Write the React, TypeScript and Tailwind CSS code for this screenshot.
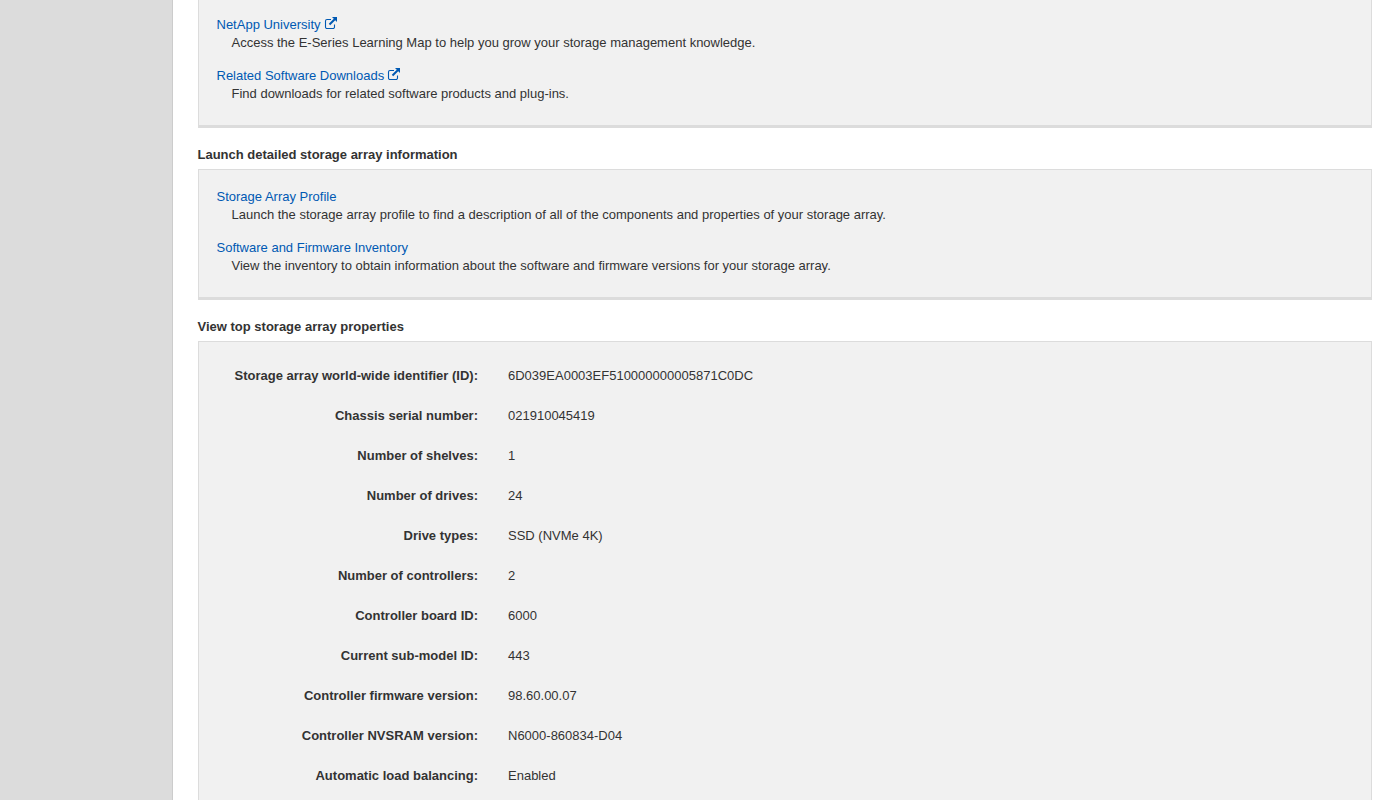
const font = { fontFamily: '"Liberation Sans", Arial, sans-serif' }

function ExternalIcon() {
  return (
    <svg viewBox="0 0 14 14" className="inline-block w-[14px] h-[14px] ml-[3px] align-[-1px]" fill="none">
      <path d="M7 3.5H3A1.5 1.5 0 0 0 1.5 5v6A1.5 1.5 0 0 0 3 12.5h6a1.5 1.5 0 0 0 1.5-1.5V8.5" stroke="currentColor" strokeWidth="1.1" />
      <path d="M5.5 8.5 11 3" stroke="currentColor" strokeWidth="2" />
      <path d="M8 1h5v5z" fill="currentColor" />
    </svg>
  )
}

function LinkItem({ title, text, external }: { title: string; text: string; external?: boolean }) {
  return (
    <div className="h-[51px]">
      <a className="block h-[18px] leading-[18px] text-[#0059b3] text-[13px]">
        {title}
        {external && <ExternalIcon />}
      </a>
      <p className="ml-[15px] h-[18px] leading-[18px] text-[13px]">{text}</p>
    </div>
  )
}

const properties = [
  ['Storage array world-wide identifier (ID):', '6D039EA0003EF510000000005871C0DC'],
  ['Chassis serial number:', '021910045419'],
  ['Number of shelves:', '1'],
  ['Number of drives:', '24'],
  ['Drive types:', 'SSD (NVMe 4K)'],
  ['Number of controllers:', '2'],
  ['Controller board ID:', '6000'],
  ['Current sub-model ID:', '443'],
  ['Controller firmware version:', '98.60.00.07'],
  ['Controller NVSRAM version:', 'N6000-860834-D04'],
  ['Automatic load balancing:', 'Enabled'],
]

export default function App() {
  return (
    <div style={font} className="flex h-[800px] overflow-hidden bg-white text-[#333333]">
      <aside className="w-[173px] shrink-0 bg-[#dcdcdc] border-r border-[#cccccc]" />
      <main className="w-[1174px] ml-[25px]">
        <section className="h-[128px] bg-[#f1f1f1] border-x border-b-[3px] border-[#dcdcdc] pl-[17.5px] pt-[16px]">
          <LinkItem external title="NetApp University" text="Access the E-Series Learning Map to help you grow your storage management knowledge." />
          <LinkItem external title="Related Software Downloads" text="Find downloads for related software products and plug-ins." />
        </section>
        <h2 className="mt-[18px] mb-[6px] -ml-[0.5px] h-[17px] leading-[17px] text-[13px] font-bold">Launch detailed storage array information</h2>
        <section className="h-[131px] bg-[#f1f1f1] border border-b-[3px] border-[#dcdcdc] pl-[17.5px] pt-[18px]">
          <LinkItem title="Storage Array Profile" text="Launch the storage array profile to find a description of all of the components and properties of your storage array." />
          <LinkItem title="Software and Firmware Inventory" text="View the inventory to obtain information about the software and firmware versions for your storage array." />
        </section>
        <h2 className="mt-[18px] mb-[6px] -ml-[0.5px] h-[17px] leading-[17px] text-[13px] font-bold">View top storage array properties</h2>
        <section className="bg-[#f1f1f1] border border-[#dcdcdc] pt-[14px] pb-[20px]">
          {properties.map(([label, value]) => (
            <div key={label} className="flex h-[40px] items-center text-[13px]">
              <div className="w-[279px] shrink-0 text-right font-bold">{label}</div>
              <div className="ml-[30px]">{value}</div>
            </div>
          ))}
        </section>
      </main>
    </div>
  )
}
